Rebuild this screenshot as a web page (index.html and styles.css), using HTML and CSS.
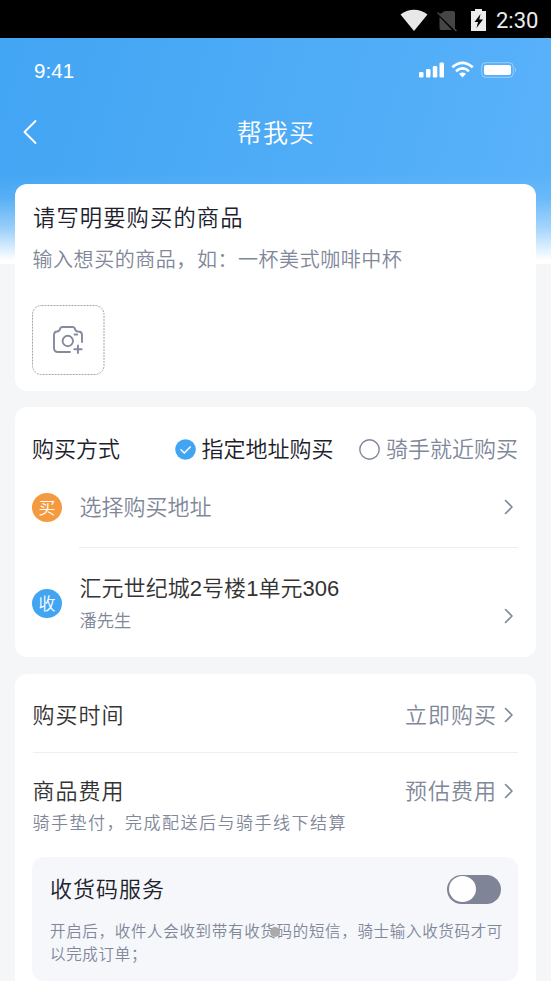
FILE: index.html
```
<!DOCTYPE html>
<html lang="zh-CN">
<head>
<meta charset="utf-8">
<title>帮我买</title>
<link rel="stylesheet" href="styles.css">
</head>
<body>
<div class="system-bar">
  <svg class="system-icons" width="92" height="28" viewBox="0 0 92 28">
    <path d="M0.5 8.5C8 2 20 2 27.500 8.500L14 25Z" fill="#e8e8e8"/>
    <path d="M45 5H53Q55 5 55 7V24L39 8.500ZM39.500 11L52 24H41Q39.500 24 39.500 22Z" fill="#454545"/>
    <path d="M37.500 6.500L56.500 25" stroke="#454545" stroke-width="1.600"/>
    <path d="M75 3H82V5H86V25H71V5H75Z" fill="#ececec"/>
    <path d="M80.500 8L74.500 16H78L76.500 22L83 13.500H79.300Z" fill="#000"/>
  </svg>
  <span class="system-time">2:30</span>
</div>
<main class="app">
  <div class="phone-bar">
    <span class="phone-time">9:41</span>
    <svg width="100" height="20" viewBox="0 0 100 20" fill="#fff">
      <rect x="1" y="12" width="4.500" height="5.500" rx="1.300"/>
      <rect x="8" y="9" width="4.500" height="8.500" rx="1.300"/>
      <rect x="14.800" y="6" width="4.500" height="11.500" rx="1.300"/>
      <rect x="21.500" y="2.500" width="4.500" height="15" rx="1.300"/>
      <g fill="none" stroke="#fff" stroke-width="2.700">
        <path d="M34.300 7.300Q44.500 -1.500 54.700 7.300"/>
        <path d="M38 11.200Q44.500 5.500 51 11.200"/>
      </g>
      <path d="M41 13.800Q44.500 11 48 13.800L44.500 17.500Z"/>
      <rect x="63.700" y="2.700" width="31.600" height="14.600" rx="4" fill="none" stroke="#fff" stroke-opacity=".4"/>
      <rect x="66" y="5" width="27" height="10" rx="2"/>
      <path d="M97 7.500Q99 10 97 12.500Z" opacity=".45"/>
    </svg>
  </div>
  <header class="nav">
    <svg class="back" width="14" height="26" viewBox="0 0 14 26"><path d="M12.500 2L1.500 13L12.500 24" fill="none" stroke="#fff" stroke-width="1.900" stroke-linecap="round" stroke-linejoin="round"/></svg>
    <h1 class="nav-title">帮我买</h1>
  </header>

  <section class="card goods">
    <h2 class="goods-title">请写明要购买的商品</h2>
    <p class="goods-hint">输入想买的商品，如：一杯美式咖啡中杯</p>
    <div class="upload">
      <svg class="upload-outline" width="73" height="70" viewBox="0 0 73 70"><rect x=".5" y=".5" width="71.500" height="69" rx="9" fill="none" stroke="#a3a6ae" stroke-dasharray="2 1"/></svg>
      <svg class="camera" width="32" height="30" viewBox="0 0 32 30" fill="none" stroke="#838b9c" stroke-width="1.900" stroke-linecap="round" stroke-linejoin="round">
        <path d="M18 27H6Q2 27 2 23V10Q2 6.500 5 6.500Q7.500 6.300 8 4Q8.500 2 10.500 2H20.500Q22.500 2 23 4Q23.500 6.300 26 6.500Q30 6.500 30 10V17"/>
        <circle cx="15.800" cy="16" r="5.200"/>
        <path d="M22.500 9.500H25.200M26 20.500V28M22.300 24.300H29.700"/>
      </svg>
    </div>
  </section>

  <section class="card address">
    <div class="method">
      <span class="label">购买方式</span>
      <span class="option option-on">
        <svg width="21" height="21" viewBox="0 0 21 21"><circle cx="10.500" cy="10.500" r="10.300" fill="#42a5f2"/><path d="M6 10.700L9.300 14L15.200 8" fill="none" stroke="#fff" stroke-width="1.500" stroke-linecap="round"/></svg>
        <span>指定地址购买</span>
      </span>
      <span class="option">
        <svg width="21" height="21" viewBox="0 0 21 21"><circle cx="10.500" cy="10.500" r="9.700" fill="none" stroke="#7f8799" stroke-width="1.400"/></svg>
        <span>骑手就近购买</span>
      </span>
    </div>
    <div class="place place-buy">
      <span class="badge badge-buy">买</span>
      <span class="place-hint">选择购买地址</span>
      <svg class="chevron" width="10" height="16" viewBox="0 0 10 16"><path d="M1.500 1.500L8 8L1.500 14.500"/></svg>
    </div>
    <div class="place place-receive">
      <span class="badge badge-receive">收</span>
      <div class="receiver">
        <div class="receiver-address">汇元世纪城2号楼1单元306</div>
        <div class="receiver-name">潘先生</div>
      </div>
      <svg class="chevron" width="10" height="16" viewBox="0 0 10 16"><path d="M1.500 1.500L8 8L1.500 14.500"/></svg>
    </div>
  </section>

  <section class="card order">
    <div class="row row-time">
      <span class="row-label">购买时间</span>
      <span class="row-value">立即购买</span>
      <svg class="chevron" width="10" height="16" viewBox="0 0 10 16"><path d="M1.500 1.500L8 8L1.500 14.500"/></svg>
    </div>
    <div class="row row-fee">
      <span class="row-label">商品费用</span>
      <span class="row-value">预估费用</span>
      <svg class="chevron" width="10" height="16" viewBox="0 0 10 16"><path d="M1.500 1.500L8 8L1.500 14.500"/></svg>
    </div>
    <p class="fee-note">骑手垫付，完成配送后与骑手线下结算</p>
    <div class="service">
      <div class="service-head">
        <span class="service-title">收货码服务</span>
        <span class="toggle"><span class="knob"></span></span>
      </div>
      <p class="service-note">开启后，收件人会收到带有收货码的短信，骑士输入收货码才可以完成订单；</p>
      <span class="touch-dot"></span>
    </div>
  </section>
</main>
</body>
</html>
```
FILE: styles.css
```
* { box-sizing: border-box; }
body, h1, h2, p { margin: 0; font-weight: 350; }
svg { display: block; flex: none; }
body {
  height: 981px;
  overflow: hidden;
  background: #f4f6f8;
  color: #20202b;
  font-family: "Liberation Sans", "Noto Sans CJK SC", sans-serif;
  white-space: nowrap;
}
.system-bar {
  height: 38px;
  padding: 0 12px 0 0;
  display: flex;
  align-items: center;
  justify-content: flex-end;
  gap: 4px;
  background: #000;
  color: #ececec;
}
.system-icons { margin-top: 1px; }
.system-time {
  width: 43px;
  margin-top: 3px;
  font: 400 22px/30px Roboto, sans-serif;
}
.app {
  height: 943px;
  padding: 0 15px;
  background:
    linear-gradient(to bottom, rgba(255,255,255,0) 136px, rgba(255,255,255,.1) 160px, rgba(255,255,255,.45) 190px, #fff 222px) 0 0 / 100% 226px no-repeat,
    linear-gradient(105deg, #42a5f3, #5ab2fa) 0 0 / 100% 226px no-repeat;
}
.phone-bar {
  height: 66px;
  padding: 0 18px 0 19px;
  display: flex;
  align-items: center;
  justify-content: space-between;
  color: #fff;
}
.phone-time { font-size: 20.5px; line-height: 24px; letter-spacing: .1px; }
.phone-bar svg { margin-top: -3px; }
.nav {
  height: 56px;
  padding-left: 8px;
  display: grid;
  grid-template-columns: 14px 1fr 22px;
  align-items: center;
  color: #fff;
}
.nav-title { padding: 1px 0 0 1px; text-align: center; font-size: 25px; line-height: 36px; letter-spacing: 1.2px; }
.card { padding: 18px; border-radius: 12px; background: #fff; }
.goods { height: 207px; margin-top: 24px; padding-top: 20px; }
.goods-title { font-size: 22.3px; line-height: 30px; letter-spacing: 1.1px; }
.goods-hint { margin: 12px 0 0 -.5px; font-size: 20px; line-height: 28px; letter-spacing: .55px; color: #7f8799; }
.upload {
  position: relative;
  width: 73px;
  height: 70px;
  margin: 31px 0 0 -1px;
  display: grid;
  place-items: center;
}
.upload-outline { position: absolute; inset: 0; }
.camera { margin-right: 1px; }
.address { height: 250px; margin-top: 16px; padding-top: 27px; }
.method { height: 30px; display: flex; align-items: center; font-size: 22px; line-height: 30px; }
.method span span, .label { padding-top: 2px; }
.label { width: 143px; margin-left: -1px; }
.option { display: flex; align-items: center; gap: 6px; color: #7f8799; }
.option-on { width: 185px; color: #20202b; }
.place { display: flex; align-items: center; font-size: 22px; }
.place-buy { position: relative; height: 84px; padding-top: 2px; }
/* Divider begins under the address text. */
.place-buy::after { content: ""; position: absolute; left: 46px; right: 0; bottom: 0; height: 1px; background: #eceeef; }
.place-hint { flex: 1; padding-top: 2px; line-height: 30px; color: #7f8799; }
.badge {
  width: 30px;
  height: 29px;
  margin: 0 17.5px 0 -1px;
  border-radius: 50%;
  color: #fff;
  font-size: 17px;
  line-height: 31px;
  text-align: center;
}
.badge-buy { background: #f59a3e; }
.badge-receive { background: #42a5f2; }
.chevron { margin-right: 4px; fill: none; stroke: #7f8799; stroke-width: 1.6; stroke-linecap: round; stroke-linejoin: round; }
.place-receive { height: 110px; }
.receiver { flex: 1; padding-top: 1px; color: #333; }
.receiver-address { line-height: 32px; letter-spacing: .05px; }
.receiver-name { margin-top: 3px; font-size: 17.3px; line-height: 26px; color: #7f8799; }
.place-receive .chevron { margin-top: 26px; }
.order { height: 330px; margin-top: 17px; padding-top: 3px; }
.row { display: flex; align-items: center; font-size: 22px; letter-spacing: 1px; color: #333; }
.row-label, .row-value { padding-bottom: 3px; }
.row-label { margin-left: -.5px; }
.row-time { height: 76px; border-bottom: 1px solid #edeff1; }
.row-fee { height: 76px; }
.row-fee .row-label, .row-fee .row-value { padding-bottom: 5px; }
.row-value { margin: 0 7px 0 auto; color: #7f8799; }
.fee-note { margin: -17px 0 0 -.5px; font-size: 17px; line-height: 24px; letter-spacing: 1.5px; color: #7f8799; }
.service {
  position: relative;
  height: 124px;
  margin: 21px 0 0 -1px;
  padding: 17px 14px 0 18px;
  border-radius: 12px;
  background: #f5f7fb;
}
.service-head { height: 30px; padding-right: 3px; display: flex; justify-content: space-between; align-items: center; font-size: 22px; letter-spacing: 1px; }
.service-title { padding-bottom: 5px; }
.toggle { width: 54px; height: 29px; padding: 1.5px; border-radius: 15px; background: #7f8596; }
.knob { display: block; width: 27px; height: 26px; border-radius: 50%; background: #fff; }
.service-note { margin-top: 16px; font-size: 15.5px; line-height: 23px; letter-spacing: .68px; color: #7f8799; white-space: normal; word-break: break-all; }
.touch-dot { position: absolute; left: 238px; top: 70px; width: 10px; height: 10px; border-radius: 50%; background: #aaa; }
```
